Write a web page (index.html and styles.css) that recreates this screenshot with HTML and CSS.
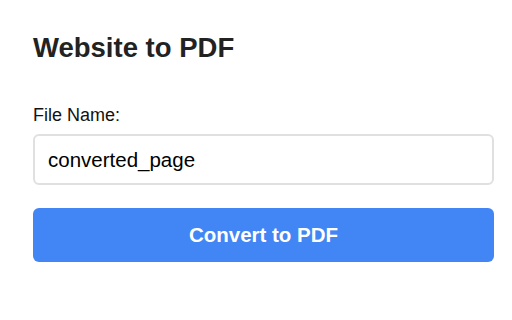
FILE: index.html
```html
<!DOCTYPE html>
<html lang="en">
<head>
  <meta charset="UTF-8">
  <meta name="viewport" content="width=device-width, initial-scale=1.0">
  <title>Website to PDF</title>
  <link rel="stylesheet" href="styles.css">
</head>
<body>
  <div class="container">
    <h1>Website to PDF</h1>

    <label for="file-name" class="field-label">File Name:</label>
    <input type="text" id="file-name" value="converted_page">

    <button id="convert-btn">Convert to PDF</button>
  </div>
</body>
</html>
```

FILE: styles.css
```css
/* Base */
* {
  margin: 0;
  padding: 0;
  box-sizing: border-box;
}

body {
  font-family: "Liberation Sans", Arial, sans-serif;
  background-color: #fff;
  color: #222;
}

.container {
  width: 461px;
  margin-left: 33px;
  padding-top: 32px;
  display: flex;
  flex-direction: column;
}

h1 {
  font-size: 27.5px;
  font-weight: bold;
  color: #222;
  margin-bottom: 41px;
}

.field-label {
  font-size: 18px;
  color: #111;
  margin-bottom: 8px;
}

input {
  height: 51px;
  padding: 0 13px;
  border: 2px solid #e0e0e0;
  border-radius: 6px;
  font-family: inherit;
  font-size: 20.5px;
  color: #000;
  outline: none;
  margin-bottom: 23px;
}

button {
  height: 54px;
  border: none;
  border-radius: 6px;
  background-color: #4285f4;
  color: #fff;
  font-family: inherit;
  font-size: 20.5px;
  font-weight: bold;
  cursor: pointer;
}
```
